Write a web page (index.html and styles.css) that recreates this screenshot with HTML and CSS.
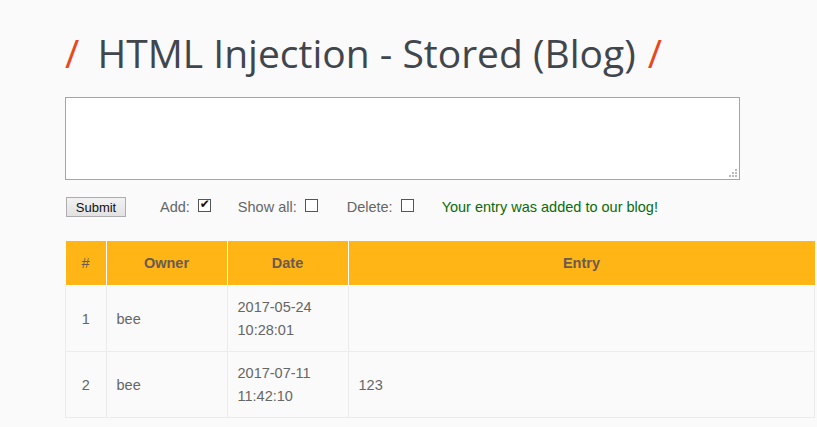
FILE: index.html
```html
<!DOCTYPE html>
<html>

<head>
  <meta charset="utf-8">
  <title>HTML Injection - Stored (Blog)</title>
  <link rel="stylesheet" href="styles.css">
</head>

<body>
  <div id="main">
    <h1><span class="slash left">/</span> HTML Injection - Stored (Blog) <span class="slash right">/</span></h1>

    <form>
      <div class="entry-box">
        <textarea name="entry"></textarea>
        <svg class="grip" width="9" height="9" viewBox="0 0 9 9">
          <path d="M6 0h2v2h-2zM3 3h2v2h-2zM6 3h2v2h-2zM0 6h2v2h-2zM3 6h2v2h-2zM6 6h2v2h-2z" fill="#bbb"/>
        </svg>
      </div>

      <div class="controls">
        <button type="button" class="submit">Submit</button>
        <label class="option first">Add: <input type="checkbox" checked></label>
        <label class="option">Show all: <input type="checkbox"></label>
        <label class="option last">Delete: <input type="checkbox"></label>
        <span class="message">Your entry was added to our blog!</span>
      </div>
    </form>

    <table id="blog">
      <tr>
        <th class="num">#</th>
        <th class="owner">Owner</th>
        <th class="date">Date</th>
        <th>Entry</th>
      </tr>
      <tr>
        <td class="num line">1</td>
        <td class="line">bee</td>
        <td>2017-05-24<br>10:28:01</td>
        <td></td>
      </tr>
      <tr>
        <td class="num line">2</td>
        <td class="line">bee</td>
        <td>2017-07-11<br>11:42:10</td>
        <td class="line">123</td>
      </tr>
    </table>
  </div>
</body>

</html>
```
FILE: styles.css
```css
html,
body {
  margin: 0;
  height: 100%;
  overflow: hidden;
}

body {
  background-color: #fafafa;
  color: #666;
  font-family: "Liberation Sans", Arial, sans-serif;
  font-size: 14.5px;
}

#main {
  padding: 27px 0 0 65px;
}

h1 {
  margin: 0;
  height: 70px;
  color: #41464d;
  font-family: "Open Sans", sans-serif;
  font-size: 39px;
  font-weight: 400;
  line-height: 52px;
  white-space: nowrap;
}

.slash {
  color: #e8481c;
}

.slash.left {
  margin-right: 8px;
}

.slash.right {
  margin-left: 2px;
}

.entry-box {
  position: relative;
  width: 675px;
}

textarea {
  display: block;
  box-sizing: border-box;
  width: 675px;
  height: 83px;
  margin: 0;
  border: 1px solid #a5a5a5;
  background-color: #fff;
  resize: none;
}

.grip {
  position: absolute;
  right: 2px;
  bottom: 2px;
}

.controls {
  display: flex;
  align-items: center;
  height: 20px;
  margin: 17px 0 24px 1px;
}

.submit {
  box-sizing: border-box;
  width: 60px;
  height: 20px;
  padding: 0;
  border: 1px solid #adadad;
  background: linear-gradient(#f2f2f2, #e2e2e2);
  color: #111;
  font-family: "Liberation Sans", Arial, sans-serif;
  font-size: 13px;
}

.option {
  display: flex;
  align-items: center;
  gap: 8px;
  margin-left: 27px;
}

.option.first {
  margin-left: 34px;
}

.option.last {
  margin-left: 29px;
}

input[type=checkbox] {
  position: relative;
  box-sizing: border-box;
  width: 13px;
  height: 13px;
  margin: 0 0 3px 0;
  border: 1px solid #555;
  background-color: #fff;
  appearance: none;
}

input[type=checkbox]:checked::after {
  content: "\2714";
  position: absolute;
  top: -3px;
  left: 1px;
  color: #111;
  font-family: "DejaVu Sans", sans-serif;
  font-size: 12px;
}

.message {
  margin-left: 28px;
  color: #0a6b0a;
}

#blog {
  width: 750px;
  table-layout: fixed;
  border-collapse: collapse;
}

#blog th,
#blog td {
  padding: 0 10px;
  border: 1px solid #ececec;
  line-height: 23px;
}

#blog th {
  height: 44px;
  border-color: #fff;
  border-top: 0;
  background-color: #ffb515;
  color: #6b5a52;
}

#blog tr:first-child th:first-child {
  border-left: 0;
}

#blog tr:first-child th:last-child {
  border-right: 0;
}

#blog td {
  height: 65px;
}

#blog td.line {
  height: 63px;
  padding-top: 2px;
}

#blog .num {
  width: 20px;
  font-weight: normal;
  text-align: center;
}

#blog .owner,
#blog .date {
  width: 100px;
}
```
